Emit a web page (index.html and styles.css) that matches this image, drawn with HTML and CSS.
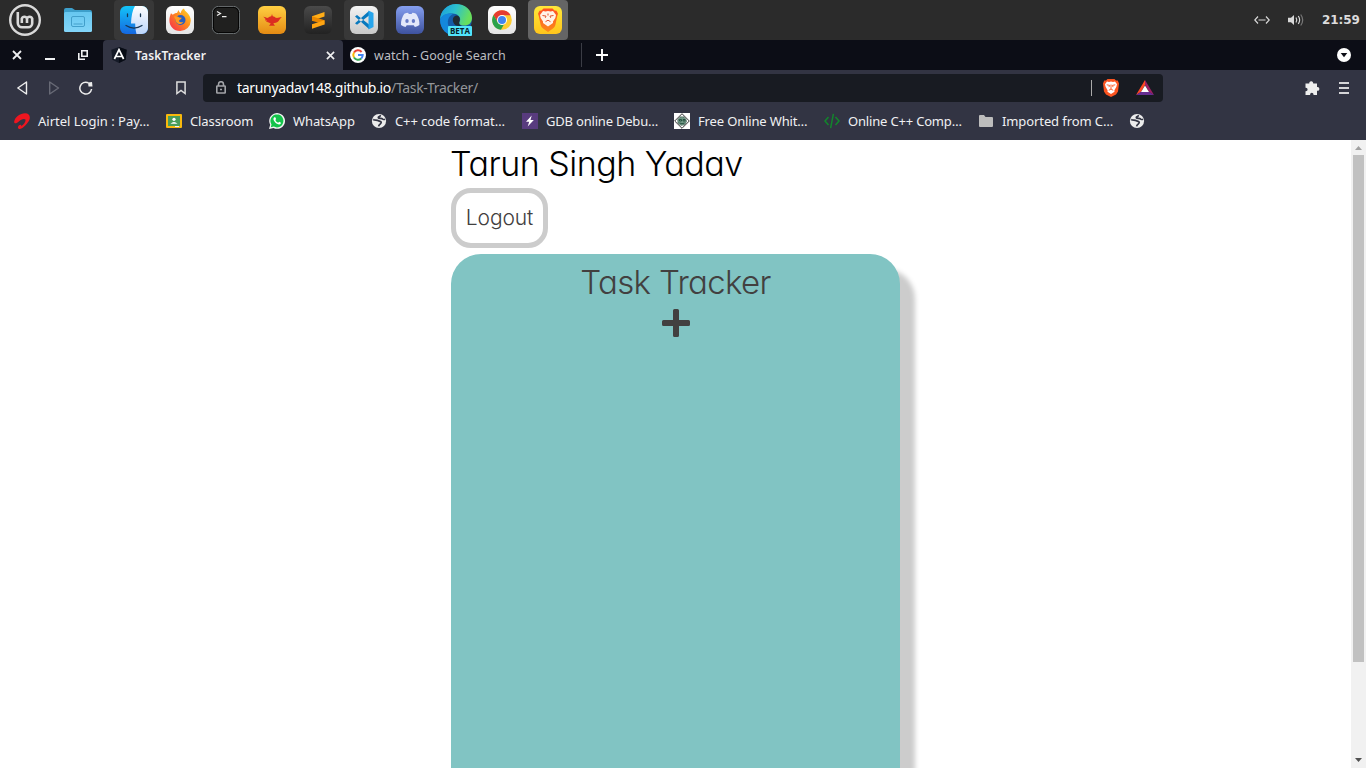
FILE: index.html
```html
<!DOCTYPE html>
<html lang="en">
<head>
<meta charset="utf-8">
<title>TaskTracker</title>
<link rel="stylesheet" href="styles.css">
</head>
<body>
<svg class="defs" width="0" height="0">
  <defs>
    <linearGradient id="folder" x2="0" y2="1"><stop stop-color="#67c7f0"/><stop offset="1" stop-color="#83d5f8"/></linearGradient>
    <linearGradient id="finderL" x2="0" y2="1"><stop stop-color="#13c4f8"/><stop offset="1" stop-color="#1568e0"/></linearGradient>
    <linearGradient id="finderR" x2="0" y2="1"><stop stop-color="#fff"/><stop offset="1" stop-color="#bcd6fb"/></linearGradient>
    <linearGradient id="white" x2="0" y2="1"><stop stop-color="#fff"/><stop offset="1" stop-color="#e4e4e4"/></linearGradient>
    <linearGradient id="code" x2="0" y2="1"><stop stop-color="#f4f4f4"/><stop offset="1" stop-color="#c8c8c8"/></linearGradient>
    <linearGradient id="fox" x1="1" x2="0" y2="1"><stop stop-color="#ffe02b"/><stop offset=".45" stop-color="#ff8a1c"/><stop offset="1" stop-color="#f32555"/></linearGradient>
    <linearGradient id="lamp" x2="0" y2="1"><stop stop-color="#ffcf42"/><stop offset="1" stop-color="#e58b13"/></linearGradient>
    <linearGradient id="dark" x2="0" y2="1"><stop stop-color="#4a4a4a"/><stop offset="1" stop-color="#222"/></linearGradient>
    <linearGradient id="discord" x2="0" y2="1"><stop stop-color="#859ff0"/><stop offset="1" stop-color="#3e529e"/></linearGradient>
    <linearGradient id="edge" x2="1" y2=".3"><stop stop-color="#199bdc"/><stop offset=".5" stop-color="#2cc0d0"/><stop offset="1" stop-color="#68df5c"/></linearGradient>
    <linearGradient id="brave" x2="0" y2="1"><stop stop-color="#ffe83a"/><stop offset="1" stop-color="#ffc51c"/></linearGradient>
    <linearGradient id="lion" x2="0" y2="1"><stop stop-color="#ff5025"/><stop offset="1" stop-color="#fb8a18"/></linearGradient>
    <symbol id="globe" viewBox="0 0 16 16"><circle cx="8" cy="8" r="7.1" fill="#ececec"/><path d="M2.200 6.500c1.800 1.200 3.500.2 5.300 1.300 1.600 1 2.800.2 2.700 1.700-.1 1.600-2.200 1.500-2.600 3.800M9.300 2.200c.3 1.800-2.200 1-2 2.500.4 1.400 3.500.2 4.200 1.300.7.800 1.500.6 2.500.3" fill="none" stroke="#323443" stroke-width="1.700"/></symbol>
    <symbol id="close" viewBox="0 0 10 10"><path d="M1 1l8 8M9 1L1 9" stroke="#f0f0f2" stroke-width="1.800"/></symbol>
  </defs>
</svg>

<header class="panel">
  <span class="launcher mint"><svg width="32" height="32" viewBox="0 0 32 32" fill="none" stroke="#d9d9d9"><circle cx="16" cy="16" r="14.800" stroke-width="2.400"/><path d="M8.800 8v11a4.200 4.200 0 0 0 4.200 4.200h6.200a4 4 0 0 0 4-4v-4.500a2.700 2.700 0 0 0-5.200 0V19M18 14.700a2.700 2.700 0 0 0-5.200 0V19" stroke-width="2.600"/></svg></span>
  <span class="launcher files"><svg width="28" height="24" viewBox="0 0 28 24"><path d="M0 2q0-2 2-2h6l3 2h15q2 0 2 2v5H0z" fill="#3d9fcb"/><rect y="4" width="28" height="20" rx="1.500" fill="url(#folder)"/><rect x="7.500" y="8.500" width="13" height="10" rx="1.500" fill="none" stroke="#429fcb"/><path d="M9.500 16h9" stroke="#429fcb"/></svg></span>
  <nav class="apps">
    <span class="app open"><svg width="28" height="28" viewBox="0 0 28 28"><rect width="28" height="28" rx="6" fill="url(#finderL)"/><path d="M15 0h7a6 6 0 0 1 6 6v16a6 6 0 0 1-6 6h-5.500c-1-4-1.300-7-1.300-10.500H11C11.300 10 12.500 4 15 0z" fill="url(#finderR)"/><path d="M7.500 8v2.600M20.500 8v2.600M6 19.500q8 5.200 16 0" fill="none" stroke="#173653" stroke-width="1.300" stroke-linecap="round"/></svg></span>
    <span class="app"><svg width="28" height="28" viewBox="0 0 28 28"><rect width="28" height="28" rx="6" fill="url(#white)"/><path d="M5 7.300l1.800 1.500C8 7.500 9.500 7 11 7l1.500-3c.5 1.500 1.200 2.500 2.200 3.200C15 5 16 3.500 18 2.500c.2 3 6.800 5 6.800 12.300A10.500 10.500 0 0 1 14.200 25C7.500 25 3.400 20 3.400 14.500c0-3 .8-5.200 1.600-7.200z" fill="url(#fox)"/><circle cx="14.500" cy="14" r="5" fill="#285fc0"/><path d="M8 10.500c2-.5 3.600-.2 5.300 1l2.500.2c-.5 1.700-2.500 1.700-2.800 3.300 1 1.800 3 1.500 4.500.8-2 4.200-8 2.200-8-2z" fill="#ff9a20"/></svg></span>
    <span class="app"><svg width="28" height="28" viewBox="0 0 28 28"><rect x="1" y="1" width="26" height="26" rx="5.500" fill="#20201f" stroke="#050505" stroke-width="2"/><rect x=".4" y=".4" width="27.200" height="27.200" rx="6" fill="none" stroke="#8c9294" stroke-width=".8"/><path d="M5 5.500l3.500 2L5 9.500M10 10.700h4.500" fill="none" stroke="#eee" stroke-width="1.200"/></svg></span>
    <span class="app"><svg width="28" height="28" viewBox="0 0 28 28"><rect width="28" height="28" rx="6" fill="url(#lamp)"/><path d="M5 10.800c2.500.2 3.500 1.400 5 1 1.200-.8 2-1.200 3.300-1.500L14 8l.7 2.300c1.300.3 2.200.7 3 1.500 2.200.6 3.800-.8 6.300-.8-1.500 1-2.200 2.200-3 3.500-1 1.500-2.500 2.200-4.700 2.400l-1 .6 1.700 2.300h-6l1.700-2.300-1-.6c-2.700-.4-4-4.900-6.700-6.100z" fill="#dc2d20"/><path d="M9.500 13.500c-1.500-1-2.300 0-1.700 1 .5.900 1.500 1.300 2.600 1.300" fill="none" stroke="#dc2d20" stroke-width=".9"/></svg></span>
    <span class="app"><svg width="28" height="28" viewBox="0 0 28 28"><rect width="28" height="28" rx="6" fill="url(#dark)"/><path d="M8 10.200L20.500 6v4.600L8 14.700z" fill="#ffad17"/><path d="M8 10.200l12.500 4v4.400L8 14.700z" fill="#e98700"/><path d="M8 18.200l12.500-4v4.400L8 22.700z" fill="#ffa512"/></svg></span>
    <span class="app open"><svg width="28" height="28" viewBox="0 0 28 28"><rect width="28" height="28" rx="6" fill="url(#code)"/><path d="M5 10.600l2-1.600 12 9.500v4.500zM5 17.200l2 1.600L19 9.500V5z" fill="#0879be"/><path d="M18.500 4.500L23.500 7v14l-5 2.500z" fill="#27a5ec"/></svg></span>
    <span class="app"><svg width="28" height="28" viewBox="0 0 28 28"><rect width="28" height="28" rx="6" fill="url(#discord)"/><path d="M8.300 7.800q2-.9 3.800-1.100l.7 1.300h2.800l.7-1.300q2 .2 3.800 1.100 3.600 5.100 3.300 11.200-2.200 1.600-4.500 2.100l-1.200-1.800h-7l-1.200 1.800Q7.200 20.600 5 19 4.700 12.900 8.300 7.800z" fill="#e3e8fa"/><ellipse cx="11" cy="15" rx="1.700" ry="2" fill="#6579c4"/><ellipse cx="17.400" cy="15" rx="1.700" ry="2" fill="#6579c4"/></svg></span>
    <span class="app"><svg width="32" height="32" viewBox="0 0 32 32"><circle cx="16" cy="16" r="15.800" fill="#145aa8"/><path d="M0 16C0 7 7 0 16 0s16 6 16 14c0 5-3.500 7.600-7.500 7.600-5 0-6-2.400-4.700-4.300C21.600 13 17 9.500 12.500 9.500 7 9.500 2 11 0 16z" fill="url(#edge)"/><path d="M0 16C2 10 8 8.500 13 10c-5 2.500-6 7.500-4.500 12S12 30 16 32C7 32 0 25 0 16z" fill="#1488dc"/><path d="M19.600 17c1-3-.6-5-3-5.400-3 .4-4.200 3-3.600 5.800.8 3.200 3 4.600 6 4.600h4c-3 0-4.800-2-3.400-5z" fill="#202b33"/></svg><b class="beta">BETA</b></span>
    <span class="app"><svg width="28" height="28" viewBox="0 0 28 28"><rect width="28" height="28" rx="6" fill="url(#white)"/><circle cx="14" cy="14" r="9.800" fill="#fccc30"/><path d="M5.500 9A9.800 9.800 0 0 1 22.600 9.300H14L9.800 16.500z" fill="#e63c30"/><path d="M5.500 9l4.400 7.400a5 5 0 0 0 6 2L13 23.800A9.800 9.800 0 0 1 5.500 9z" fill="#2ba24c"/><circle cx="14" cy="14" r="5" fill="#fff"/><circle cx="14" cy="14" r="4" fill="#4285ef"/></svg></span>
    <span class="app active"><svg width="28" height="28" viewBox="0 0 28 28"><rect width="28" height="28" rx="6" fill="url(#brave)"/><path d="M9.500 2.500h9l2 2 2 .2 1.500 3-.7 2-2 9.500q-.5 2-2.300 3.300L14 26l-5-3.500q-1.800-1.300-2.300-3.300l-2-9.500-.7-2 1.500-3 2-.2z" fill="url(#lion)"/><path d="M9 5l2.500.5L14 5l2.500.5L19 5l3 4-.7 3-2.300 3.500v1.500L14 20.500 9 17v-1.500L6.700 12 6 9z" fill="#fff4e8"/><path d="M8.500 9.500l3.500.6-.7 1.700M19.500 9.500l-3.500.6.7 1.700M14 7.500v2M11.500 15.700l2.500-1.500 2.500 1.500" fill="none" stroke="#e2512a" stroke-width="1"/></svg></span>
  </nav>
  <div class="tray">
    <svg width="16" height="8" viewBox="0 0 16 8" fill="none" stroke="#d8d8d8" stroke-width="1.200"><path d="M4 .5L.8 4 4 7.500M12 .5L15.200 4 12 7.500M4.500 4h7"/></svg>
    <svg width="17" height="14" viewBox="0 0 17 14" fill="none" stroke="#d8d8d8" stroke-width="1.200"><path d="M0 4.700h3L6 2v10L3 9.300H0z" fill="#d8d8d8" stroke="none"/><path d="M8 4.500q1.600 2.500 0 5M10.300 3q2.700 4 0 8"/><path d="M12.700 1.500q4 5.500 0 11" stroke="#777"/></svg>
    <time class="clock">21:59</time>
  </div>
</header>

<div class="tabstrip">
  <div class="window-buttons">
    <svg width="10" height="10"><use href="#close"/></svg>
    <svg width="10" height="10" viewBox="0 0 10 10"><path d="M0 9h10" stroke="#f0f0f2" stroke-width="2"/></svg>
    <svg width="10" height="10" viewBox="0 0 10 10" fill="none" stroke="#f0f0f2" stroke-width="1.600"><path d="M3.800.8h5.400v5.400H3.800zM.8 3v6.200H7"/></svg>
  </div>
  <div class="tab current">
    <svg width="16" height="16" viewBox="0 0 16 16"><path d="M8 0l7.700 2.700-1.100 10L8 16l-6.600-3.300-1.100-10z" fill="#151a27"/><path d="M8 0l7.700 2.700-1.100 10L8 16z" fill="#080c15"/><path d="M3.400 12L8 2.700l4.600 9.300M5.300 9.500h5.400" fill="none" stroke="#fff" stroke-width="1.700"/></svg>
    <span class="tab-title">TaskTracker</span>
    <svg class="tab-close" width="9" height="9"><use href="#close"/></svg>
  </div>
  <div class="tab">
    <svg width="16" height="16" viewBox="0 0 16 16"><circle cx="8" cy="8" r="8" fill="#fff"/><g fill="none" stroke-width="2"><path d="M11.600 5A4.700 4.700 0 0 0 4 5.600" stroke="#ea4335"/><path d="M4 5.600a4.700 4.700 0 0 0 0 4.900" stroke="#fbbc05"/><path d="M4 10.500a4.700 4.700 0 0 0 7.200.9" stroke="#34a853"/><path d="M8 8h4.700q0 2-1.500 3.400" stroke="#4285f4"/></g></svg>
    <span class="tab-title">watch - Google Search</span>
  </div>
  <svg class="new-tab" width="12" height="12" viewBox="0 0 12 12"><path d="M6 0v12M0 6h12" stroke="#fff" stroke-width="1.900"/></svg>
  <svg class="tab-search" width="14" height="14" viewBox="0 0 14 14"><circle cx="7" cy="7" r="7" fill="#fff"/><path d="M3.700 5h6.600L7 9.300z" fill="#0c0d16"/></svg>
</div>

<div class="toolbar">
  <div class="nav">
    <svg width="14" height="14" viewBox="0 0 14 14"><path d="M11.500 1v12L2.800 7z" fill="none" stroke="#eee" stroke-width="1.400" stroke-linejoin="round"/></svg>
    <svg width="14" height="14" viewBox="0 0 14 14"><path d="M2.700 1v12L11.500 7z" fill="none" stroke="#686a76" stroke-width="1.400" stroke-linejoin="round"/></svg>
    <svg width="14" height="14" viewBox="0 0 14 14"><path d="M9.300 1.800A5.900 5.900 0 1 0 12.600 8" fill="none" stroke="#eee" stroke-width="1.500"/><path d="M9 1.500l4-.5.500 4.500H9.500z" fill="#eee"/></svg>
  </div>
  <svg class="save" width="10" height="14" viewBox="0 0 10 14"><path d="M.9 1h8.200v11.500L5 9.500l-4.100 3z" fill="none" stroke="#ddd" stroke-width="1.500"/></svg>
  <div class="address">
    <svg width="10" height="13" viewBox="0 0 10 13" fill="none" stroke="#a2a4a8" stroke-width="1.600"><rect x=".8" y="5" width="8.400" height="7" rx=".5"/><path d="M2.500 5V3.200a2.500 2.500 0 0 1 5 0V5M4 8.500h2"/></svg>
    <span class="url">tarunyadav148.github.io<span class="path">/Task-Tracker/</span></span>
    <i class="divider"></i>
    <svg width="16" height="18" viewBox="0 0 16 18"><path d="M4.500 0h7L13 1.600h1.800L16 4.400l-1 8-2 3L8 18l-5-2.600-2-3-1-8 1.200-2.800H3z" fill="#fb5420"/><path d="M4 2.500l2 .6L8 2.500l2 .6 2-.6 2 2.700-.6 2.500-2 3.600.1 1.400L8 15l-3.500-2.300.1-1.400-2-3.600L2 5.200z" fill="#fff"/><path d="M3.700 5.800l3 .6-.8 1.700M12.300 5.800l-3 .6.8 1.700M8 5.500v4.700M5.800 11.300L8 10l2.200 1.300" fill="none" stroke="#fb5420" stroke-width=".9"/></svg>
    <svg class="bat" width="18" height="15" viewBox="0 0 18 15"><path d="M9 0L0 15l5-3 4-7z" fill="#ff4724"/><path d="M9 0l9 15-5-3-4-7z" fill="#9e1f63"/><path d="M0 15h18l-5-3.200H5z" fill="#662d91"/><path d="M9 5.500l4 6.500H5z" fill="#fff"/></svg>
  </div>
  <svg class="extensions" width="16" height="16" viewBox="0 0 16 16"><path d="M1.500 3.500h3.700a2 2 0 0 1 4-.500v.5H13V7h.5a1.900 1.900 0 0 1 0 3.800H13V15H9.500v-.5a1.700 1.700 0 0 0-3.400 0v.5H1.500v-3.800h.4a1.700 1.700 0 0 0 0-3.400h-.4z" fill="#eee"/></svg>
  <svg class="menu" width="10" height="12" viewBox="0 0 10 12"><path d="M0 1h10M0 6h10M0 11h10" stroke="#d5d5d8" stroke-width="1.800"/></svg>
</div>

<nav class="bookmarks">
  <span class="bookmark airtel"><svg width="16" height="16" viewBox="0 0 16 16"><path d="M.2 8.500C1 4 6 .3 11 .2c4 0 5.600 3 4.500 6.300C14.200 10 9.500 15.300 6 15.900c-2.200.1-2.700-1.800-1.200-3.300 1.500-1.300 3-1 2.300.6 2.700-1.400 5-4.700 4.300-6.600-1-1.600-4.600-.2-6.600 1.900C2.600 10.900-.2 11 .2 8.500z" fill="#ee1620"/></svg><span>Airtel Login : Pay…</span></span>
  <span class="bookmark classroom"><svg width="16" height="16" viewBox="0 0 16 16"><rect y="1" width="16" height="14" rx="1" fill="#f9b90d"/><path d="M2 3h12v10H2z" fill="#4a9d5a"/><circle cx="8" cy="6.300" r="1.600" fill="#fff"/><path d="M4.500 10.800q3.500-3.600 7 0z" fill="#fff"/><path d="M9 13h4v1H9z" fill="#f4f4f4"/></svg><span>Classroom</span></span>
  <span class="bookmark whatsapp"><svg width="16" height="16" viewBox="0 0 16 16"><path d="M0 16l1.200-4.200A7.900 7.900 0 1 1 4.500 15z" fill="#f4f4f4"/><path d="M1.800 14.200l.7-2.700a6.500 6.500 0 1 1 2.300 2.100z" fill="#14c44b"/><path d="M5.300 4.200c-1.500 1-1 3 .8 5s4.600 3.200 5.700 1.200c.3-.7 0-.9-1.600-1.600l-1 1C7.800 9.200 6.900 8.300 6.400 7l.7-.9-.8-1.900z" fill="#fff"/></svg><span>WhatsApp</span></span>
  <span class="bookmark cpp"><svg width="16" height="16"><use href="#globe"/></svg><span>C++ code format…</span></span>
  <span class="bookmark gdb"><svg width="16" height="16" viewBox="0 0 16 16"><path d="M0 0h16v16H0z" fill="#583b7e"/><path d="M9.700 2.500L4 8.800h3.200l-1.500 4.700 6.100-6.600H8.500z" fill="#fff"/></svg><span>GDB online Debu…</span></span>
  <span class="bookmark board"><svg width="16" height="16" viewBox="0 0 16 16"><path d="M0 0h16v16H0z" fill="#fff"/><path d="M8 .7L15.300 8 8 15.300.7 8z" fill="#fff" stroke="#333"/><circle cx="8" cy="8" r="4.300" fill="#719886" stroke="#345247" stroke-dasharray="1 .6"/><path d="M5.500 6.500h2V8h-2zM9 6.500h2V8H9zM5.500 10q2.500 1.500 5 0" fill="none" stroke="#174433" stroke-width=".8"/></svg><span>Free Online Whit…</span></span>
  <span class="bookmark online"><svg width="16" height="16" viewBox="0 0 16 16"><path d="M4.500 4L1 8l3.500 4M11.500 4L15 8l-3.500 4M9.400.8L6.600 15.200" fill="none" stroke="#12862c" stroke-width="1.500"/></svg><span>Online C++ Comp…</span></span>
  <span class="bookmark imported"><svg width="16" height="16" viewBox="0 0 16 16"><path d="M1 3q0-1 1-1h4l1.500 2H14q1 0 1 1v8q0 1-1 1H2q-1 0-1-1z" fill="#bdbdbd"/></svg><span>Imported from C…</span></span>
  <span class="bookmark"><svg width="16" height="16"><use href="#globe"/></svg></span>
</nav>

<div class="viewport">
  <main class="page">
    <h1 class="user">Tarun Singh Yadav</h1>
    <button class="logout">Logout</button>
    <section class="tracker">
      <h2 class="heading">Task Tracker</h2>
      <svg class="add" width="28" height="28" viewBox="0 0 28 28"><path d="M12.500 0h3q1.500 0 1.500 1.500V11h9.500q1.500 0 1.500 1.500v3q0 1.500-1.500 1.500H17v9.500q0 1.500-1.500 1.500h-3q-1.500 0-1.500-1.500V17H1.500Q0 17 0 15.500v-3Q0 11 1.500 11H11V1.500Q11 0 12.500 0z" fill="#424040"/></svg>
    </section>
  </main>
  <aside class="scrollbar">
    <svg width="7" height="4" viewBox="0 0 7 4"><path d="M0 4l3.500-4L7 4z" fill="#a0a0a0"/></svg>
    <i class="thumb"></i>
    <svg width="7" height="4" viewBox="0 0 7 4"><path d="M0 0h7L3.500 4z" fill="#505050"/></svg>
  </aside>
</div>
</body>
</html>
```

FILE: styles.css
```css
* { box-sizing: border-box; }
body {
  margin: 0;
  width: 1366px;
  height: 768px;
  overflow: hidden;
  display: flex;
  flex-direction: column;
  background: #fff;
  font-family: "Noto Sans", "Open Sans", sans-serif;
  font-size: 13px;
  white-space: nowrap;
}
svg { display: block; flex: none; }
.defs { position: absolute; }

.panel {
  height: 40px;
  flex: none;
  display: flex;
  align-items: center;
  background: #2b2b2b;
}
.launcher { display: flex; justify-content: center; }
.mint { width: 50px; }
.files { width: 56px; }
.apps { display: flex; gap: 6px; margin-left: 8px; }
.app {
  position: relative;
  width: 40px;
  height: 40px;
  display: flex;
  align-items: center;
  justify-content: center;
  border-radius: 4px;
}
.open { background: #383838; }
.active { background: #656565; }
.beta {
  position: absolute;
  left: 12px;
  top: 26px;
  width: 24px;
  height: 10px;
  background: #51e4fb;
  color: #082128;
  border-radius: 1px;
  font: 700 8px/10px "Open Sans", sans-serif;
  text-align: center;
}
.tray {
  display: flex;
  align-items: center;
  gap: 18px;
  margin-left: auto;
  padding-right: 7px;
}
.clock {
  font: 700 12px/16px "DejaVu Sans", sans-serif;
  color: #dcdcdc;
  width: 37px;
  margin-left: -1px;
  letter-spacing: -.1px;
}

.tabstrip {
  height: 30px;
  flex: none;
  display: flex;
  align-items: center;
  background: #0c0d16;
}
.window-buttons { display: flex; gap: 23px; width: 103px; padding-left: 12px; }
.tab {
  width: 239px;
  height: 24px;
  display: flex;
  align-items: center;
  padding: 0 8px 0 7px;
  gap: 8px;
  color: #bdbdc1;
  border-right: 1px solid #3b3c45;
}
.current {
  width: 240px;
  height: 30px;
  padding-left: 8px;
  border: 0;
  border-radius: 4px 4px 0 0;
  background: #323443;
  color: #f2f2f4;
}
.tab-title { font-size: 12.500px; letter-spacing: .05px; }
.current .tab-title { font-weight: 600; font-size: 12px; letter-spacing: .15px; }
.tab-close { margin-left: auto; }
.new-tab { margin-left: 14px; }
.tab-search { margin-left: auto; margin-right: 15px; }

.toolbar {
  height: 35px;
  flex: none;
  display: flex;
  align-items: center;
  background: #323443;
}
.nav { display: flex; gap: 18px; width: 176px; padding-left: 15px; }
.save { margin-right: 17px; }
.address {
  width: 960px;
  height: 28px;
  display: flex;
  align-items: center;
  padding: 0 9px 0 13px;
  border-radius: 4px;
  background: #181b22;
  color: #fff;
}
.url { margin-left: 11px; font-size: 14px; letter-spacing: -.32px; }
.path { color: #94969a; }
.divider { width: 1px; height: 16px; margin: 0 11px 0 auto; background: #aaa; }
.bat { margin-left: 17px; }
.extensions { margin-left: 141px; }
.menu { margin-left: 19px; }

.bookmarks {
  height: 35px;
  flex: none;
  display: flex;
  align-items: center;
  gap: 16px;
  padding: 0 0 4px 14px;
  background: #323443;
  color: #f0f0f2;
  letter-spacing: -.1px;
}
.bookmark { display: flex; align-items: center; gap: 8px; }
.airtel span { width: 112px; letter-spacing: 0; }
.gdb span { width: 112px; letter-spacing: -.2px; }
.classroom span { width: 63px; }
.whatsapp span { width: 62px; }
.cpp span, .imported span { width: 111px; }
.board span { width: 110px; letter-spacing: -.15px; }
.online span { width: 114px; letter-spacing: -.18px; }

.viewport { flex: 1; min-height: 0; display: flex; }
.page {
  flex: 1;
  padding-left: 451px;
  font-family: Inter, sans-serif;
  font-feature-settings: "cv11";
  font-weight: 300;
  overflow: hidden;
}
.user {
  margin: 0 0 0 -1px;
  height: 48px;
  font-size: 34px;
  line-height: 47px;
  font-weight: 300;
  letter-spacing: -.5px;
  color: #000;
}
.logout {
  display: block;
  width: 97px;
  height: 60px;
  padding: 0 0 2px;
  border: 5px solid #ccc;
  border-radius: 20px;
  background: #fff;
  font: inherit;
  font-feature-settings: inherit;
  font-size: 21px;
  letter-spacing: -.1px;
  color: #424040;
}
.tracker {
  width: 449px;
  height: 680px;
  margin-top: 6px;
  display: flex;
  flex-direction: column;
  align-items: center;
  background: #81c4c3;
  border-radius: 30px;
  box-shadow: 15px 15px 5px #ccc;
}
.heading {
  margin: 0;
  height: 55px;
  font-size: 33px;
  line-height: 57px;
  font-weight: 300;
  letter-spacing: -.65px;
  color: #424040;
}
.scrollbar {
  width: 15px;
  display: flex;
  flex-direction: column;
  align-items: center;
  padding: 6px 0;
  background: #f1f1f1;
}
.thumb { width: 11px; height: 507px; margin: 5px 0 auto; background: #c1c1c1; }
```
